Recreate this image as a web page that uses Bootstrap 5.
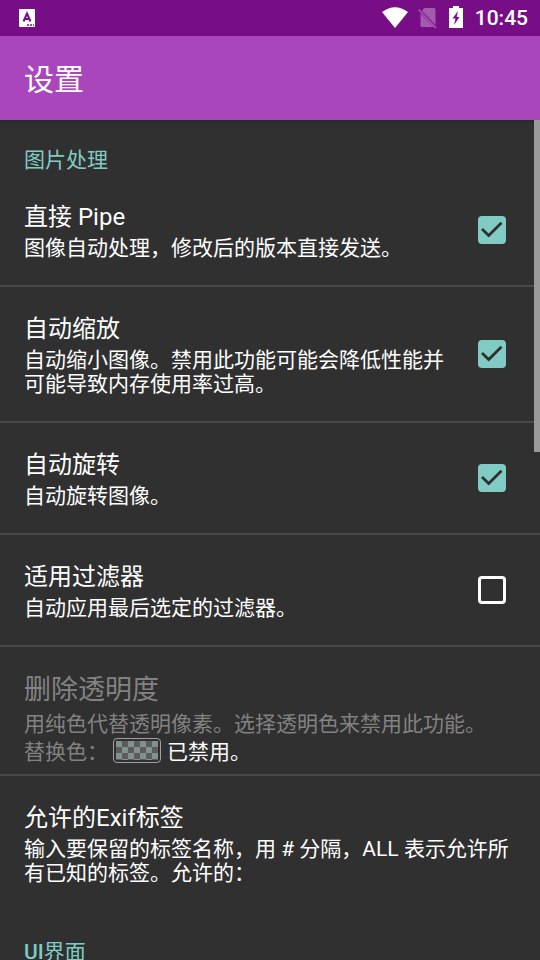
<!DOCTYPE html>
<html lang="zh-CN" data-bs-theme="dark">
<head>
<meta charset="utf-8">
<meta name="viewport" content="width=device-width, initial-scale=1">
<title>设置</title>
<link href="https://cdn.jsdelivr.net/npm/bootstrap@5.3.0/dist/css/bootstrap.min.css" rel="stylesheet">
<style>
  body { font-family: Roboto, "Noto Sans CJK SC", sans-serif; background: #303030; color: #fff; }
  .status-bar { height: 36px; background: #770e86; padding: 0 12px 0 18px; font-size: 21px; line-height: 36px; }
  .app-bar { height: 84px; background: #aa46bb; padding: 3px 24px 0; }
  .app-title { font-size: 30px; line-height: 40px; }
  .settings-pane { min-height: 0; background: linear-gradient(#282828, #303030 4px); }
  .section-title { font-size: 21px; line-height: 24px; padding: 28px 24px 3px; color: #80cbc4; }
  .setting { padding: 26px 24px 25px; border-bottom: 2px solid #494949; }
  .setting-last { border-bottom-color: transparent; }
  .setting-off { padding: 23px 24px 8px; color: #828282; }
  .setting-name { font-size: 24px; line-height: 32px; margin-bottom: 3px; }
  .setting-off .setting-name { font-size: 27px; line-height: 40px; margin-bottom: 0; }
  .setting-note { font-size: 21px; line-height: 24px; }
  .setting-off .setting-note { line-height: 28px; }
  .setting .form-check-input { width: 28px; height: 28px; margin: 0 10px 2px 24px; border: 3px solid #fff; border-radius: 4px; background-color: transparent; }
  .setting .form-check-input:checked { border: 0; background-color: #80cbc4; background-size: 28px 28px;
    background-image: url("data:image/svg+xml,%3csvg xmlns='http://www.w3.org/2000/svg' viewBox='0 0 28 28'%3e%3cpath fill='none' stroke='%23303030' stroke-width='2.8' d='M4 13l6.700 6.500L23.500 6.700'/%3e%3c/svg%3e"); }
  .swatch { width: 48px; height: 25px; margin: 0 6px 0 5px; padding: 2px; border: 1px solid #a0a0a0; border-radius: 4px; background: transparent; }
  .swatch-fill { height: 19px; background: repeating-conic-gradient(#5c5c5c 0 25%, #809190 0 50%) 0 0 / 12px 12px; }
  .scroll-thumb { width: 6px; height: 332px; background: #9a9a98; }
</style>
<script src="https://cdn.jsdelivr.net/npm/bootstrap@5.3.0/dist/js/bootstrap.bundle.min.js"></script>
</head>
<body class="d-flex flex-column vh-100 overflow-hidden">
<header class="flex-shrink-0">
  <div class="status-bar d-flex align-items-center">
    <svg width="18" height="20" viewBox="0 0 18 20" aria-hidden="true">
      <rect x="1" y="1" width="16" height="18" rx="1" fill="#fff"/>
      <path d="M5.500 13.500L9 5.500l3.500 8M6.500 11h5" fill="none" stroke="#770e86" stroke-width="2"/>
      <path d="M9 17h2m1 0h2m1 0h1" stroke="#770e86" stroke-width="1.500"/>
    </svg>
    <div class="d-flex align-items-center ms-auto fw-medium">
      <svg width="28" height="24" viewBox="0 0 28 24" aria-hidden="true"><path d="M1 6Q14-3.500 27 6L14 22Z" fill="#fff"/></svg>
      <svg class="ms-2" width="20" height="24" viewBox="0 0 20 24" aria-hidden="true">
        <path d="M7 2h10q1.500 0 1.500 1.500v15.500L5 5ZM3.500 7.500L17 21H5q-1.500 0-1.500-1.500Z" fill="#a35bae"/>
        <path d="M1.500 3.500L19 22" stroke="#a35bae" stroke-width="1.600"/>
      </svg>
      <svg class="ms-2 ps-1" width="18" height="24" viewBox="0 0 14 24" aria-hidden="true">
        <path d="M4 0h6v2h4v20H0V2h4Z" fill="#fff"/>
        <path d="M9 5L3.500 12.500h3L5 19l5.500-8H7.700Z" fill="#770e86"/>
      </svg>
      <time class="ms-2 ps-1">10:45</time>
    </div>
  </div>
  <div class="app-bar d-flex align-items-center">
    <h1 class="app-title fw-normal m-0">设置</h1>
  </div>
</header>
<main class="settings-pane flex-grow-1 overflow-hidden position-relative">
  <section>
    <h2 class="section-title fw-normal m-0">图片处理</h2>
    <div class="setting d-flex align-items-center">
      <label class="flex-grow-1" for="pipe"><span class="setting-name d-block">直接 Pipe</span><span class="setting-note d-block">图像自动处理，修改后的版本直接发送。</span></label>
      <input class="form-check-input flex-shrink-0" type="checkbox" id="pipe" checked>
    </div>
    <div class="setting d-flex align-items-center">
      <label class="flex-grow-1" for="scale"><span class="setting-name d-block">自动缩放</span><span class="setting-note d-block">自动缩小图像。禁用此功能可能会降低性能并可能导致内存使用率过高。</span></label>
      <input class="form-check-input flex-shrink-0" type="checkbox" id="scale" checked>
    </div>
    <div class="setting d-flex align-items-center">
      <label class="flex-grow-1" for="rotate"><span class="setting-name d-block">自动旋转</span><span class="setting-note d-block">自动旋转图像。</span></label>
      <input class="form-check-input flex-shrink-0" type="checkbox" id="rotate" checked>
    </div>
    <div class="setting d-flex align-items-center">
      <label class="flex-grow-1" for="filter"><span class="setting-name d-block">适用过滤器</span><span class="setting-note d-block">自动应用最后选定的过滤器。</span></label>
      <input class="form-check-input flex-shrink-0" type="checkbox" id="filter">
    </div>
    <div class="setting setting-off">
      <div class="setting-name">删除透明度</div>
      <div class="setting-note">用纯色代替透明像素。选择透明色来禁用此功能。</div>
      <div class="setting-note d-flex align-items-start">
        <span>替换色：</span>
        <button class="swatch" type="button" aria-label="替换色"><span class="swatch-fill d-block"></span></button>
        <span class="text-white">已禁用。</span>
      </div>
    </div>
    <div class="setting setting-last">
      <div class="setting-name">允许的Exif标签</div>
      <div class="setting-note">输入要保留的标签名称，用 # 分隔，ALL 表示允许所有已知的标签。允许的：</div>
    </div>
  </section>
  <section>
    <h2 class="section-title fw-normal m-0"><span class="fw-medium">UI</span>界面</h2>
  </section>
  <div class="scroll-thumb position-absolute top-0 end-0"></div>
</main>
</body>
</html>
